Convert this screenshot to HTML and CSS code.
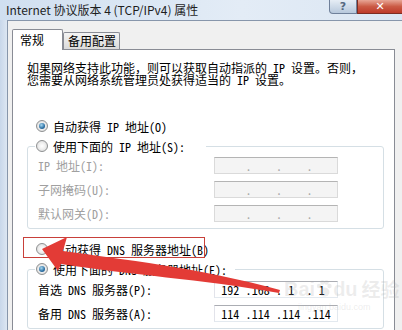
FILE: index.html
```html
<!DOCTYPE html>
<html lang="zh-CN">
<head>
    <meta charset="UTF-8">
    <title>Internet 协议版本 4 (TCP/IPv4) 属性</title>
    <link rel="stylesheet" href="styles.css">
</head>
<body>
    <div class="titlebar">
        <span class="title">Internet 协议版本 4 (TCP/IPv4) 属性</span>
        <div class="caption-btns">
            <span class="btn-help">?</span>
            <span class="btn-close">✕</span>
        </div>
    </div>
    <div class="frame">
        <div class="frame-edge"></div>
        <div class="client">
            <div class="tabs">
                <div class="tab active">常规</div>
                <div class="tab">备用配置</div>
            </div>
            <div class="panel">
                <p class="intro">如果网络支持此功能，则可以获取自动指派的 IP 设置。否则，<br>您需要从网络系统管理员处获得适当的 IP 设置。</p>

                <div class="radio-row first"><span class="radio checked"></span>自动获得 IP 地址(O)</div>
                <fieldset class="group">
                    <legend class="legend-row wide"><span class="radio"></span>使用下面的 IP 地址(S):</legend>
                    <div class="field-row off">
                        <span>IP 地址(I):</span>
                        <div class="ip-box"><span class="seg"></span><span class="dot">.</span><span class="seg"></span><span class="dot">.</span><span class="seg"></span><span class="dot">.</span><span class="seg"></span></div>
                    </div>
                    <div class="field-row off">
                        <span>子网掩码(U):</span>
                        <div class="ip-box"><span class="seg"></span><span class="dot">.</span><span class="seg"></span><span class="dot">.</span><span class="seg"></span><span class="dot">.</span><span class="seg"></span></div>
                    </div>
                    <div class="field-row off">
                        <span>默认网关(D):</span>
                        <div class="ip-box"><span class="seg"></span><span class="dot">.</span><span class="seg"></span><span class="dot">.</span><span class="seg"></span><span class="dot">.</span><span class="seg"></span></div>
                    </div>
                </fieldset>

                <div class="radio-row dns-auto"><span class="radio"></span>自动获得 DNS 服务器地址(B)</div>
                <fieldset class="group dns">
                    <legend class="legend-row"><span class="radio checked"></span>使用下面的 DNS 服务器地址(E):</legend>
                    <div class="field-row">
                        <span>首选 DNS 服务器(P):</span>
                        <div class="ip-box on"><span class="seg">192</span><span class="dot">.</span><span class="seg">168</span><span class="dot">.</span><span class="seg">1</span><span class="dot">.</span><span class="seg">1</span></div>
                    </div>
                    <div class="field-row">
                        <span>备用 DNS 服务器(A):</span>
                        <div class="ip-box on"><span class="seg">114</span><span class="dot">.</span><span class="seg">114</span><span class="dot">.</span><span class="seg">114</span><span class="dot">.</span><span class="seg">114</span></div>
                    </div>
                </fieldset>
            </div>
        </div>
    </div>

    <!-- annotation drawn over the screenshot -->
    <svg class="arrow" width="402" height="330" viewBox="0 0 402 330">
        <path d="M42,249 L67,237 L63,251 C120,259 200,268 280,290 L279,293 C200,279 130,275 61,264 L58,271 Z" fill="#e33b36"/>
    </svg>

    <div class="watermark">
        <div class="wm-logo">Bai<svg width="16" height="18" viewBox="0 0 16 18"><circle cx="3" cy="6" r="2.2"/><circle cx="6.5" cy="2.5" r="2.2"/><circle cx="10.5" cy="2.5" r="2.2"/><circle cx="13.5" cy="6" r="2.2"/><ellipse cx="8.5" cy="12" rx="5" ry="4.5"/></svg>du<span class="wm-cn">经验</span></div>
        <div class="wm-url">jingyan.baidu.com</div>
    </div>
</body>
</html>
```

FILE: styles.css
```css
body {
    margin: 0;
    width: 402px;
    height: 330px;
    overflow: hidden;
    position: relative;
    font-family: "Noto Sans CJK SC", sans-serif;
    font-size: 12px;
    background: #d9e4f1;
}

.titlebar {
    height: 20px;
    display: flex;
    justify-content: space-between;
    align-items: flex-start;
    background: linear-gradient(to right, #d0dff0, #e3ecf6 60%, #dbe6f3);
}

.title {
    padding-left: 6px;
    line-height: 19px;
    color: #1e1e1e;
}

.caption-btns {
    display: flex;
}

.btn-help {
    width: 26px;
    height: 13px;
    border: 1px solid #6f809a;
    border-top: 0;
    border-radius: 0 0 0 4px;
    background: linear-gradient(#e6edf5, #b7c8dc);
    color: #55677f;
    font: bold 11px/13px "DejaVu Sans", sans-serif;
    text-align: center;
}

.btn-close {
    width: 44px;
    height: 13px;
    border: 1px solid #7c2c22;
    border-top: 0;
    border-right: 0;
    background: linear-gradient(#e8a696, #cb5b45 50%, #bd3a2a);
    color: #fff;
    font: bold 11px/13px "DejaVu Sans", sans-serif;
    text-align: center;
}

.frame {
    display: flex;
    height: 310px;
}

.frame-edge {
    width: 7px;
    background: linear-gradient(to right, #c8d7ea, #dce6f2);
}

.client {
    flex: 1;
    display: flex;
    flex-direction: column;
    background: #f0f0f0;
    border-top: 1px solid #8796ab;
    border-left: 1px solid #8796ab;
    padding: 8px 7px 0 4px;
    min-height: 0;
}

.tabs {
    display: flex;
    align-items: flex-end;
    height: 20px;
    flex: none;
    position: relative;
    z-index: 1;
}

.tab {
    height: 16px;
    line-height: 16px;
    padding: 0 3px 0 4px;
    border: 1px solid #898c95;
    border-bottom: 0;
    border-radius: 2px 2px 0 0;
    background: linear-gradient(#f4f4f4, #dadada);
    color: #000;
}

.tab.active {
    height: 20px;
    line-height: 20px;
    margin-bottom: -1px;
    padding: 0 18px 0 7px;
    background: #fff;
}

.panel {
    flex: 1;
    min-height: 0;
    overflow: hidden;
    background: #fff;
    border: 1px solid #898c95;
    border-bottom: 0;
    padding: 12px 10px 0 14px;
    font-family: "Noto Sans Mono CJK SC", "Noto Sans CJK SC", monospace;
    color: #000;
}

.intro {
    margin: 0;
    line-height: 12px;
    white-space: nowrap;
}

.radio-row,
.legend-row {
    display: flex;
    align-items: center;
    gap: 5px;
    height: 16px;
    white-space: nowrap;
}

.radio-row {
    padding-left: 9px;
}

.radio-row.first {
    margin-top: 32px;
}

.radio-row.dns-auto {
    margin-top: 12px;
    position: relative;
}

.radio-row.dns-auto::after {
    content: "";
    position: absolute;
    left: -4px;
    top: -4px;
    width: 182px;
    height: 21px;
    box-sizing: border-box;
    border: 1px solid #c8403a;
}

.radio {
    flex: none;
    position: relative;
    width: 12px;
    height: 12px;
    box-sizing: border-box;
    border-radius: 50%;
    border: 1px solid #8e9091;
    background: radial-gradient(circle, #fff 0, #f1f1f1 40%, #d3d3d3 100%);
}

.radio.checked::after {
    content: "";
    position: absolute;
    left: 2px;
    top: 2px;
    width: 6px;
    height: 6px;
    border-radius: 50%;
    background: radial-gradient(circle at 40% 35%, #a9d9f1, #2b6fa3 60%, #17476f);
}

.group {
    margin: 4px 0 0;
    padding: 3px 0 6px 10px;
    border: 1px solid #d5dfe5;
    border-radius: 3px;
    min-width: 0;
}

.group.dns {
    padding-top: 4px;
}

.legend-row {
    margin-left: -3px;
    padding: 0 8px 0 1px;
}

.legend-row.wide {
    padding-right: 21px;
}

.field-row {
    display: grid;
    grid-template-columns: 176px 124px;
    align-items: center;
    height: 17px;
    white-space: nowrap;
}

.field-row + .field-row {
    margin-top: 7px;
}

.field-row.off {
    color: #a0a0a0;
}

.ip-box {
    display: flex;
    height: 17px;
    box-sizing: border-box;
    padding-left: 3px;
    line-height: 15px;
    border: 1px solid #dadada;
    border-top-color: #b4b4b4;
    background: #f4f4f4;
    color: #a8a8a8;
}

.ip-box.on {
    background: #fff;
    border-color: #e3e9ef;
    border-top-color: #abadb3;
    border-left-color: #e2e3ea;
    color: #000;
}

.seg {
    flex: 1;
    text-align: center;
    padding-right: 3px;
}

.dot {
    width: 3px;
    text-align: center;
}

.arrow {
    position: absolute;
    left: 0;
    top: 0;
    pointer-events: none;
}

.watermark {
    position: absolute;
    left: 284px;
    top: 277px;
    color: rgba(170, 170, 170, 0.22);
    pointer-events: none;
}

.wm-logo {
    display: flex;
    align-items: center;
    font: bold 20px/24px "Liberation Sans", sans-serif;
}

.wm-logo svg {
    fill: rgba(170, 170, 170, 0.22);
    margin: 0 1px;
}

.wm-cn {
    margin-left: 4px;
    font: bold 19px/24px "Noto Sans CJK SC", sans-serif;
}

.wm-url {
    margin: 1px 0 0 14px;
    font: 9px/10px "Liberation Sans", sans-serif;
}
```
